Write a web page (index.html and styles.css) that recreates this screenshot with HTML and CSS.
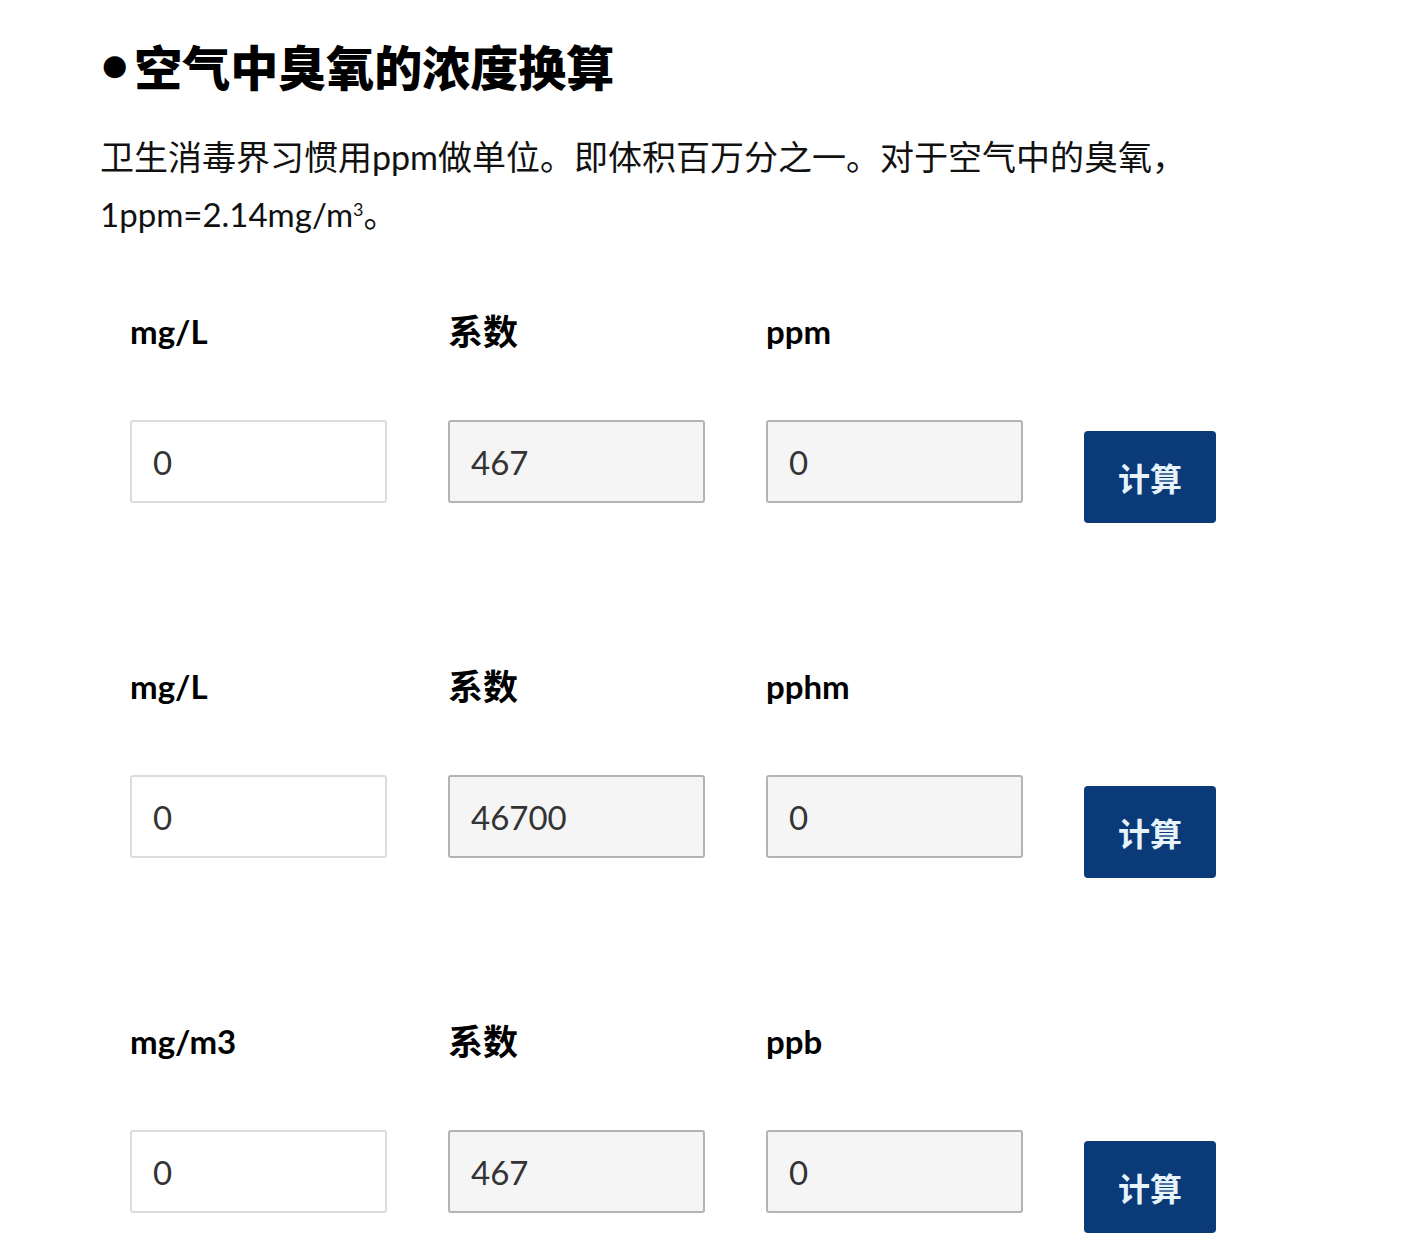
FILE: index.html
```html
<!DOCTYPE html>
<html lang="zh">
<head>
<meta charset="utf-8">
<title>空气中臭氧的浓度换算</title>
<link rel="stylesheet" href="styles.css">
</head>
<body>
<div class="page">
  <h2 class="title"><span class="bullet">●</span>空气中臭氧的浓度换算</h2>
  <p class="intro">卫生消毒界习惯用ppm做单位。即体积百万分之一。对于空气中的臭氧，<br><span class="latin">1ppm=2.14mg/m<sup>3</sup></span>。</p>

  <div class="calc">
    <div class="label">mg/L</div>
    <div class="label cjk">系数</div>
    <div class="label">ppm</div>
    <div></div>
    <input class="field" type="text" value="0">
    <input class="field ro" type="text" value="467" readonly>
    <input class="field ro" type="text" value="0" readonly>
    <button class="btn">计算</button>
  </div>

  <div class="calc">
    <div class="label">mg/L</div>
    <div class="label cjk">系数</div>
    <div class="label">pphm</div>
    <div></div>
    <input class="field" type="text" value="0">
    <input class="field ro" type="text" value="46700" readonly>
    <input class="field ro" type="text" value="0" readonly>
    <button class="btn">计算</button>
  </div>

  <div class="calc">
    <div class="label">mg/m3</div>
    <div class="label cjk">系数</div>
    <div class="label">ppb</div>
    <div></div>
    <input class="field" type="text" value="0">
    <input class="field ro" type="text" value="467" readonly>
    <input class="field ro" type="text" value="0" readonly>
    <button class="btn">计算</button>
  </div>
</div>
</body>
</html>
```

FILE: styles.css
```css
html, body {
  margin: 0;
  padding: 0;
  background: #fff;
}
body {
  font-family: Lato, "Noto Sans CJK SC", sans-serif;
  color: #111;
}
.page {
  padding: 35px 0 0 100px;
}
.title {
  margin: 0;
  font-family: "Noto Sans CJK SC", sans-serif;
  font-weight: 900;
  font-size: 48px;
  line-height: 60px;
  color: #000;
  display: flex;
  align-items: center;
}
.bullet {
  font-family: "DejaVu Sans", sans-serif;
  font-size: 29px;
  margin-right: 7px;
  margin-left: 2px;
}
.intro {
  margin: 33px 0 0 0;
  font-size: 34px;
  line-height: 57px;
  color: #111;
}
.intro .latin {
  font-size: 33px;
}
.intro sup {
  font-size: 18px;
  line-height: 0;
  vertical-align: 11px;
}
.calc {
  display: grid;
  grid-template-columns: 257px 257px 257px 132px;
  column-gap: 61px;
  margin: 70px 0 0 30px;
  align-items: start;
}
.calc + .calc {
  margin-top: 145px;
}
.label {
  font-weight: 700;
  font-size: 33px;
  line-height: 36px;
  height: 36px;
  margin-bottom: 71px;
  color: #000;
}
.label.cjk {
  font-size: 35px;
}
.field {
  box-sizing: border-box;
  width: 257px;
  height: 83px;
  margin: 0;
  padding: 0 0 0 21px;
  border: 2px solid #dcdcdc;
  border-radius: 3px;
  background: #fff;
  font-family: Lato, sans-serif;
  font-size: 33px;
  color: #333;
  outline: none;
}
.field.ro {
  background: #f5f5f5;
  border-color: #b3b3b3;
}
.btn {
  box-sizing: border-box;
  width: 132px;
  height: 92px;
  margin-top: 11px;
  border: none;
  border-radius: 4px;
  background: #0b3a78;
  color: #e6f3fb;
  font-family: "Noto Sans CJK SC", sans-serif;
  font-weight: 700;
  font-size: 32px;
  padding: 0;
  cursor: pointer;
}
```
